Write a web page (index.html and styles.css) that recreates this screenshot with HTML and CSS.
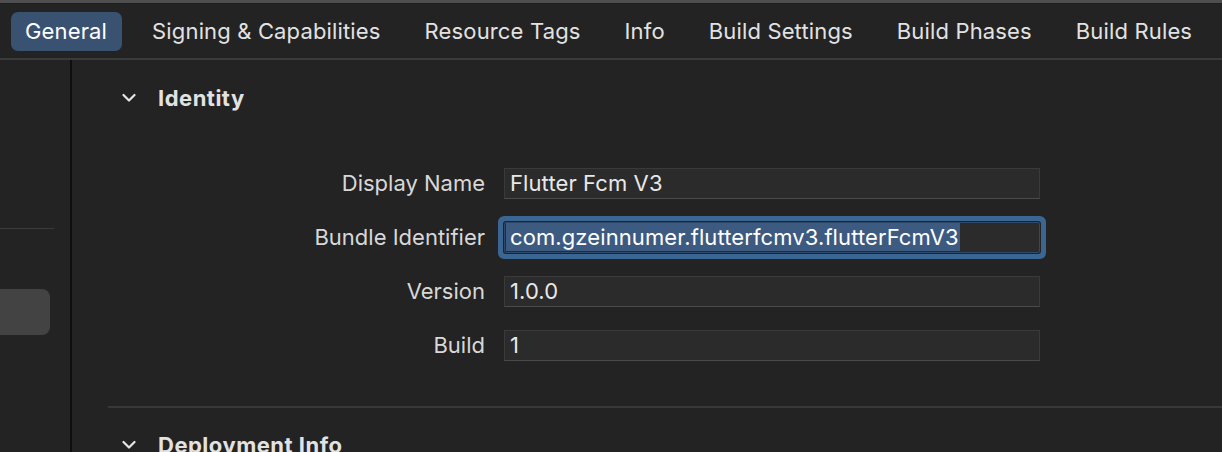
FILE: index.html
```html
<!DOCTYPE html>
<html>
<head>
<meta charset="utf-8">
<link rel="stylesheet" href="styles.css">
</head>
<body>
<div class="topline"></div>
<nav class="tabbar">
  <div class="tab active">General</div>
  <div class="tab">Signing &amp; Capabilities</div>
  <div class="tab">Resource Tags</div>
  <div class="tab">Info</div>
  <div class="tab">Build Settings</div>
  <div class="tab">Build Phases</div>
  <div class="tab">Build Rules</div>
</nav>
<div class="main">
  <aside class="sidebar">
    <div class="side-sep"></div>
    <div class="side-item"></div>
  </aside>
  <section class="content">
    <div class="section-head">
      <svg class="chev" width="14" height="10" viewBox="0 0 14 10"><path d="M1.5 2 L7 7.5 L12.5 2" fill="none" stroke="#e6e6e6" stroke-width="2.2" stroke-linecap="round" stroke-linejoin="round"/></svg>
      <span class="head-title">Identity</span>
    </div>
    <div class="form">
      <label class="lbl">Display Name</label>
      <div class="field">Flutter Fcm V3</div>
      <label class="lbl">Bundle Identifier</label>
      <div class="field focused"><span class="sel">com.gzeinnumer.flutterfcmv3.flutterFcmV3</span></div>
      <label class="lbl">Version</label>
      <div class="field">1.0.0</div>
      <label class="lbl">Build</label>
      <div class="field">1</div>
    </div>
    <div class="divider"></div>
    <div class="section-head second">
      <svg class="chev" width="14" height="10" viewBox="0 0 14 10"><path d="M1.5 2 L7 7.5 L12.5 2" fill="none" stroke="#e6e6e6" stroke-width="2.2" stroke-linecap="round" stroke-linejoin="round"/></svg>
      <span class="head-title">Deployment Info</span>
    </div>
  </section>
</div>
</body>
</html>
```

FILE: styles.css
```css
* { box-sizing: border-box; }
html, body {
  margin: 0;
  padding: 0;
  width: 1222px;
  height: 452px;
  overflow: hidden;
  background: #232323;
  font-family: "Inter", "Noto Sans", sans-serif;
  color: #e0e0e0;
}
.topline {
  height: 4px;
  background: #4e4e4e;
  border-bottom: 1px solid #1c1c1c;
}
.tabbar {
  height: 56px;
  display: flex;
  align-items: center;
  gap: 16px;
  padding-left: 11px;
  border-bottom: 2px solid #3a3a3a;
  background: #232323;
}
.tab {
  height: 39px;
  display: flex;
  align-items: center;
  padding: 0 14px;
  font-size: 22px;
  letter-spacing: 0.15px;
  color: #e2e2e2;
  border-radius: 7px;
  white-space: nowrap;
}
.tab.active {
  background: #3a5271;
  color: #ffffff;
  padding-right: 15px;
}
.main {
  display: flex;
  height: 392px;
}
.sidebar {
  width: 72px;
  flex: none;
  border-right: 2px solid #0e0e0e;
  padding-top: 168px;
}
.side-sep {
  width: 54px;
  height: 1px;
  background: #3a3a3a;
}
.side-item {
  margin-top: 60px;
  width: 50px;
  height: 46px;
  background: #434343;
  border-radius: 0 8px 8px 0;
}
.content {
  flex: 1;
  padding-left: 36px;
}
.section-head {
  display: flex;
  align-items: center;
  height: 36px;
  margin-top: 20px;
  padding-left: 14px;
}
.chev { flex: none; margin-right: 22px; }
.head-title {
  font-size: 22px;
  font-weight: 700;
  color: #e2e2e2;
  letter-spacing: 0.5px;
  white-space: nowrap;
}
.form {
  display: grid;
  grid-template-columns: 377px 536px;
  column-gap: 19px;
  row-gap: 23px;
  margin-top: 52px;
}
.lbl {
  text-align: right;
  font-size: 22px;
  color: #d8d8d8;
  line-height: 31px;
  white-space: nowrap;
}
.field {
  height: 31px;
  background: #2b2b2b;
  border: 1px solid #3a3a3a;
  border-bottom-color: #4a4a4a;
  padding-left: 5px;
  font-size: 22px;
  line-height: 29px;
  color: #e8e8e8;
  letter-spacing: 0.1px;
  white-space: nowrap;
}
.field.focused {
  box-shadow: 0 0 0 1px #232323, 0 0 0 6px #3b6592;
  border-radius: 2px;
  border-color: #2f4a68;
  padding-left: 1px;
}
.sel {
  background: #3d5a81;
  color: #ffffff;
  padding: 0 1px 0 4px;
  display: inline-block;
  line-height: 28px;
}
.divider {
  margin-top: 45px;
  height: 2px;
  background: #383838;
}
.section-head.second {
  margin-top: 19px;
}
```
